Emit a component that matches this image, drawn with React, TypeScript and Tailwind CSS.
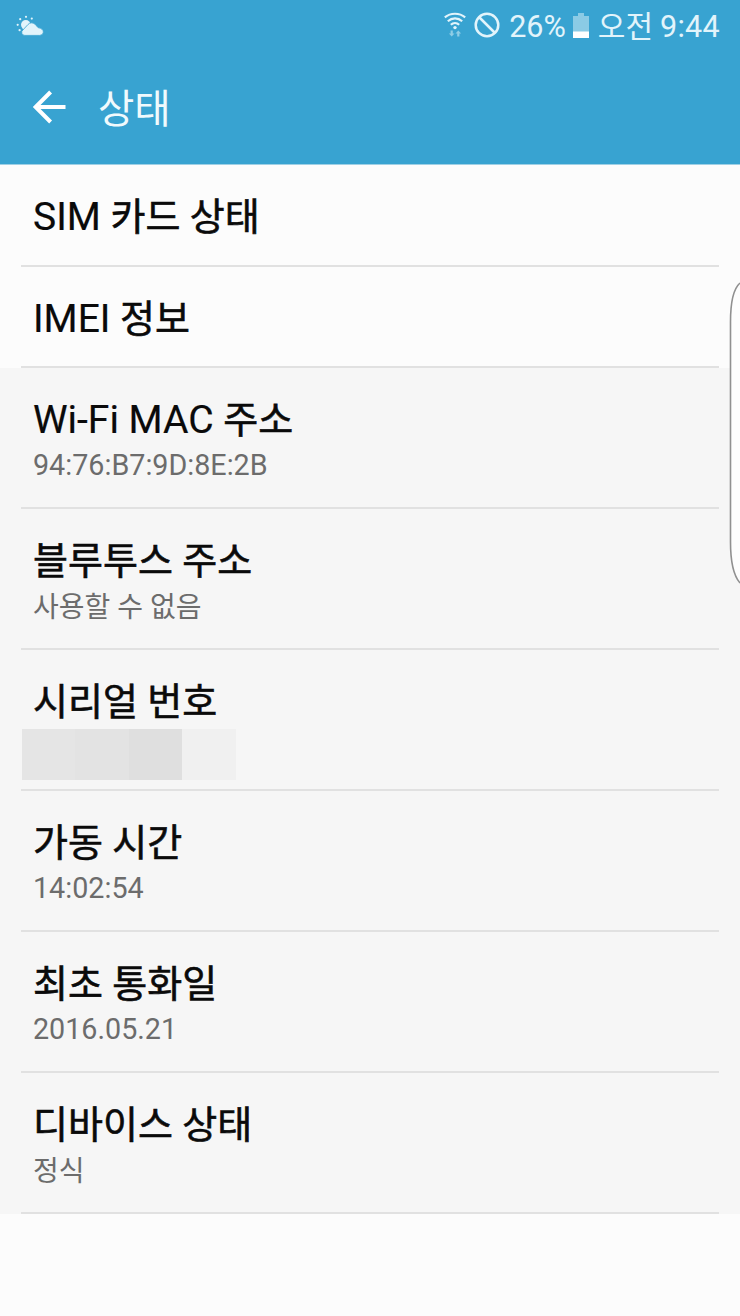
import React from 'react';

interface StatusItem {
  title: string;
  value?: string;
  masked?: boolean;
  link?: boolean;
}

const items: StatusItem[] = [
  { title: 'SIM 카드 상태', link: true },
  { title: 'IMEI 정보', link: true },
  { title: 'Wi-Fi MAC 주소', value: '94:76:B7:9D:8E:2B' },
  { title: '블루투스 주소', value: '사용할 수 없음' },
  { title: '시리얼 번호', masked: true },
  { title: '가동 시간', value: '14:02:54' },
  { title: '최초 통화일', value: '2016.05.21' },
  { title: '디바이스 상태', value: '정식' },
];

const WeatherIcon = () => (
  <svg className="w-[28px] h-[22px]" viewBox="0 0 28 22" fill="#e2f4fb">
    <circle cx="9.8" cy="9.8" r="4.8" />
    <g>
      <circle cx="10" cy="1.8" r="1.1" />
      <circle cx="15.8" cy="3.6" r="1.1" />
      <circle cx="4.2" cy="4.2" r="1.1" />
      <circle cx="1.7" cy="9.8" r="1.1" />
      <circle cx="3.6" cy="15.2" r="1.1" />
    </g>
    <path
      d="M8.8 20.4a3 3 0 0 1-1.9-5.4l5-5.4q3.1-3.3 7.2-.4l2.9 3.4q5.2.9 5.4 4.5-.2 3.1-3.6 3.3z"
      stroke="#38a3d1"
      strokeWidth=".8"
    />
  </svg>
);

const WifiIcon = () => (
  <svg className="w-[22px] h-[26px]" viewBox="0 0 22 26" fill="none" stroke="#e2f4fb" strokeWidth="2.1">
    <path d="M.8 5.4C6.5.5 15.5.5 21.2 5.4" />
    <path d="M3.8 9.2c4.2-3.8 10.2-3.8 14.4 0" />
    <path d="M6.8 12.8c2.5-2.3 5.9-2.3 8.4 0" />
    <circle cx="11" cy="15.6" r="1.7" fill="#e2f4fb" stroke="none" />
    <g fill="#8fcde6" stroke="none">
      <path d="M7.7 24.5l-2.8-3h1.7v-3h2.2v3h1.7z" />
      <path d="M14.3 18.5l2.8 3h-1.7v3h-2.2v-3h-1.7z" />
    </g>
  </svg>
);

const BlockedIcon = () => (
  <svg className="w-[26px] h-[26px]" viewBox="0 0 26 26" fill="none" stroke="#e2f4fb" strokeWidth="2.5">
    <circle cx="13" cy="13" r="11.3" />
    <path d="M5 5l16 16" />
  </svg>
);

const BatteryIcon = () => (
  <svg className="w-[16px] h-[25px]" viewBox="0 0 16 25">
    <path d="M5 0h6v3h5v16H0V3h5z" fill="#8bcbe5" />
    <path d="M0 18.5h16V25H0z" fill="#fff" />
  </svg>
);

const BackIcon = () => (
  <svg className="w-[34px] h-[34px]" viewBox="0 0 34 34" fill="none" stroke="#fff" strokeWidth="4">
    <path d="M18.6 2L3.6 17l15 15M3.6 17H33.5" />
  </svg>
);

const MaskedValue = () => (
  <div className="flex -ml-[11px] mt-[3px] h-[51px]">
    <div className="w-[53px] bg-[#e5e5e5]"></div>
    <div className="w-[54px] bg-[#e3e3e3]"></div>
    <div className="w-[53px] bg-[#dfdfdf]"></div>
    <div className="w-[54px] bg-[#f0f0f0]"></div>
  </div>
);

// Hangul is set a little smaller and heavier than the Latin beside it
const Title: React.FC<{ text: string }> = ({ text }) => (
  <h2 className="text-[39px] leading-[48px] h-[48px] font-normal text-[#0a0a0a] whitespace-nowrap [-webkit-text-stroke:0.2px]">
    {text.split(/([가-힣][가-힣 ]*)/).filter(Boolean).map((part, idx) => (
      <span key={idx} className={/[가-힣]/.test(part) ? 'text-[38px] [-webkit-text-stroke:0.6px]' : ''}>{part}</span>
    ))}
  </h2>
);

const Row: React.FC<{ item: StatusItem }> = ({ item }) => (
  <div className={item.link ? 'h-[101.5px] px-[21px] bg-[#fcfcfc]' : 'h-[141px] px-[21px] bg-[#f6f6f6]'}>
    <div className="h-full pl-3 pt-[28px] border-b-2 border-[#e1e1e1]">
      <Title text={item.title} />
      {item.value && (
        <p className={`leading-[36px] text-[#6c6c6c] whitespace-nowrap ${/[가-힣]/.test(item.value) ? 'mt-[5px] text-[28px]' : 'mt-[3px] text-[28.7px]'}`}>
          {item.value}
        </p>
      )}
      {item.masked && <MaskedValue />}
    </div>
  </div>
);

const App: React.FC = () => {
  return (
    <div className="relative w-[740px] h-[1316px] overflow-hidden bg-[#fcfcfc] font-[Roboto,'Noto_Sans_CJK_KR',sans-serif]">
      <header className="h-[165px] bg-[#38a3d1] border-b border-[#9fd0e5]">
        <div className="h-[52px] pl-[16px] pr-[20px] flex items-center justify-between text-[#e2f4fb]">
          <WeatherIcon />
          <div className="flex items-center text-[30.5px] leading-[40px] whitespace-nowrap">
            <div className="-mt-[2px]">
              <WifiIcon />
            </div>
            <div className="ml-[8px] -mt-[2px]">
              <BlockedIcon />
            </div>
            <span className="ml-[9px] mt-[2px]">26%</span>
            <div className="ml-[7px] -mt-[2px]">
              <BatteryIcon />
            </div>
            <span className="ml-[9px] mt-[2px] text-[30px]">오전</span>
            <span className="ml-[7px] mt-[2px] tracking-[0.3px]">9:44</span>
          </div>
        </div>
        <div className="h-[110px] pl-[32px] flex items-center">
          <BackIcon />
          <h1 className="ml-[32px] mt-[6px] text-[39.5px] leading-[48px] text-[#f0fafd]">상태</h1>
        </div>
      </header>

      <main>
        {items.map((item) => (
          <Row key={item.title} item={item} />
        ))}
      </main>

      {/* edge panel handle */}
      <svg className="absolute right-0 top-[280px] w-[12px] h-[306px]" viewBox="0 0 12 306">
        <path d="M12 3C5 9 2.5 22 2.5 42v220c0 20 2.5 33 9.5 41z" fill="#fdfdfd" />
        <path d="M12 3C5 9 2.5 22 2.5 42v220c0 20 2.5 33 9.5 41" fill="none" stroke="#909090" strokeWidth="1.6" />
      </svg>
    </div>
  );
};

export default App;
